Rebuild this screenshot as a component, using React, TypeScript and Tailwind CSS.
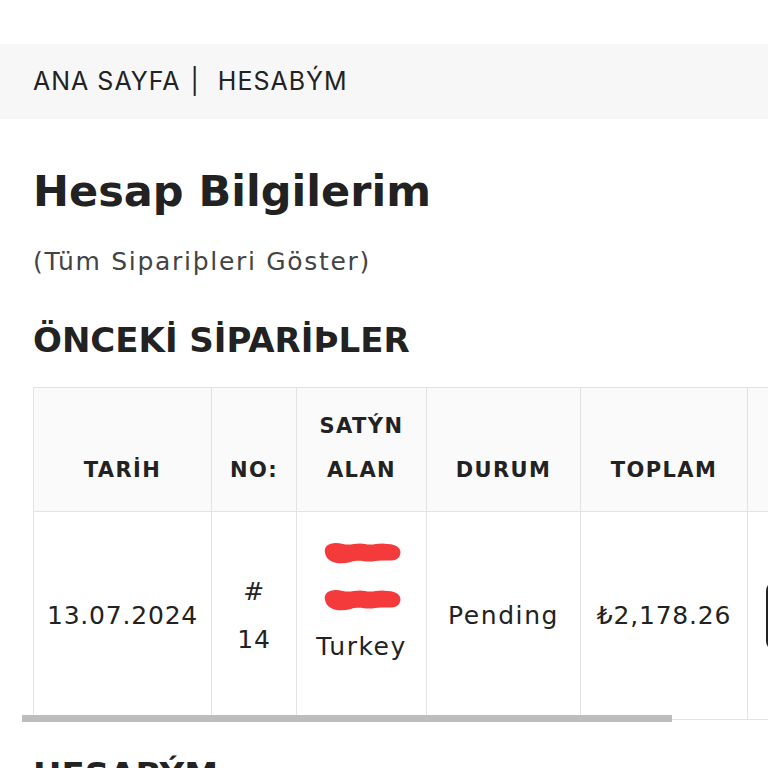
import React from "react";

const inter = { fontFamily: "Inter, 'Noto Sans', sans-serif" };
const wide = { fontFamily: "'DejaVu Sans', Verdana, sans-serif" };

function Redacted({ w = 82 }: { w?: number }) {
  return (
    <svg width={w} height={28} viewBox="0 0 82 28" className="inline-block">
      <path
        d="M4 14 C2 5 12 2 22 5 C30 7 36 3 44 5 C52 7 58 3 66 5 C78 5 82 12 78 18 C74 24 62 20 54 22 C46 24 38 20 30 23 C18 26 6 24 4 14 Z"
        fill="#f43a3a"
      />
    </svg>
  );
}

export default function App() {
  const th =
    "border border-[#e3e3e3] align-bottom pb-[19px] text-[21px] font-bold leading-[44px] tracking-[1.4px]";
  const td = "border border-[#e3e3e3] align-middle";
  return (
    <div className="min-h-screen bg-white text-[#222] overflow-hidden" style={wide}>
      <div className="h-[44px]" />
      {/* breadcrumb */}
      <div className="bg-[#f7f7f7] h-[75px] flex items-center px-[33px] text-[25px] tracking-[1px]" style={inter}>
        <span>ANA SAYFA</span>
        <span className="ml-[10px] mr-[14px]">|</span>
        <span className="ml-[4px]">HESABÝM</span>
      </div>

      <main className="px-[33px]">
        <h1 className="mt-[42px] text-[43px] font-bold leading-[60px]">Hesap Bilgilerim</h1>
        <p className="mt-[24px] text-[25px] text-[#444] leading-[34px] tracking-[1.7px]">(Tüm Sipariþleri Göster)</p>
        <h2 className="mt-[38px] text-[34px] font-bold leading-[46px]">ÖNCEKİ SİPARİÞLER</h2>

        <div className="relative mt-[24px] w-[900px]">
          <table className="table-fixed border-collapse w-[900px] text-center">
            <thead>
              <tr className="bg-[#fafafa] h-[124px]">
                <th className={`w-[178px] ${th}`}>TARİH</th>
                <th className={`w-[85px] ${th}`}>NO:</th>
                <th className={`w-[130px] ${th}`}>
                  SATÝN
                  <br />
                  ALAN
                </th>
                <th className={`w-[154px] ${th}`}>DURUM</th>
                <th className={`w-[167px] ${th}`}>TOPLAM</th>
                <th className="border border-[#e3e3e3]"></th>
              </tr>
            </thead>
            <tbody>
              <tr className="h-[208px] text-[25px] tracking-[0.8px]">
                <td className={td}>13.07.2024</td>
                <td className={`${td} leading-[48px]`}>
                  #
                  <br />
                  14
                </td>
                <td className={td}>
                  <div className="flex flex-col items-center mb-[32px] leading-[47px]">
                    <div className="h-[47px] flex items-center">
                      <Redacted />
                    </div>
                    <div className="h-[47px] flex items-center">
                      <Redacted />
                    </div>
                    <div className="tracking-[1.5px]">Turkey</div>
                  </div>
                </td>
                <td className={`${td} tracking-[1.6px]`}>Pending</td>
                <td className={td}>₺2,178.26</td>
                <td className={`${td} pl-[18px] text-left`}>
                  <div className="w-[120px] h-[70px] rounded-[10px] bg-[#222]" />
                </td>
              </tr>
            </tbody>
          </table>
          <div className="absolute left-[-11px] bottom-[-2px] w-[650px] h-[7px] bg-[#bdbdbd]" />
        </div>

        <h2 className="mt-[32px] text-[34px] font-bold leading-[46px]">HESABÝM</h2>
      </main>
    </div>
  );
}
